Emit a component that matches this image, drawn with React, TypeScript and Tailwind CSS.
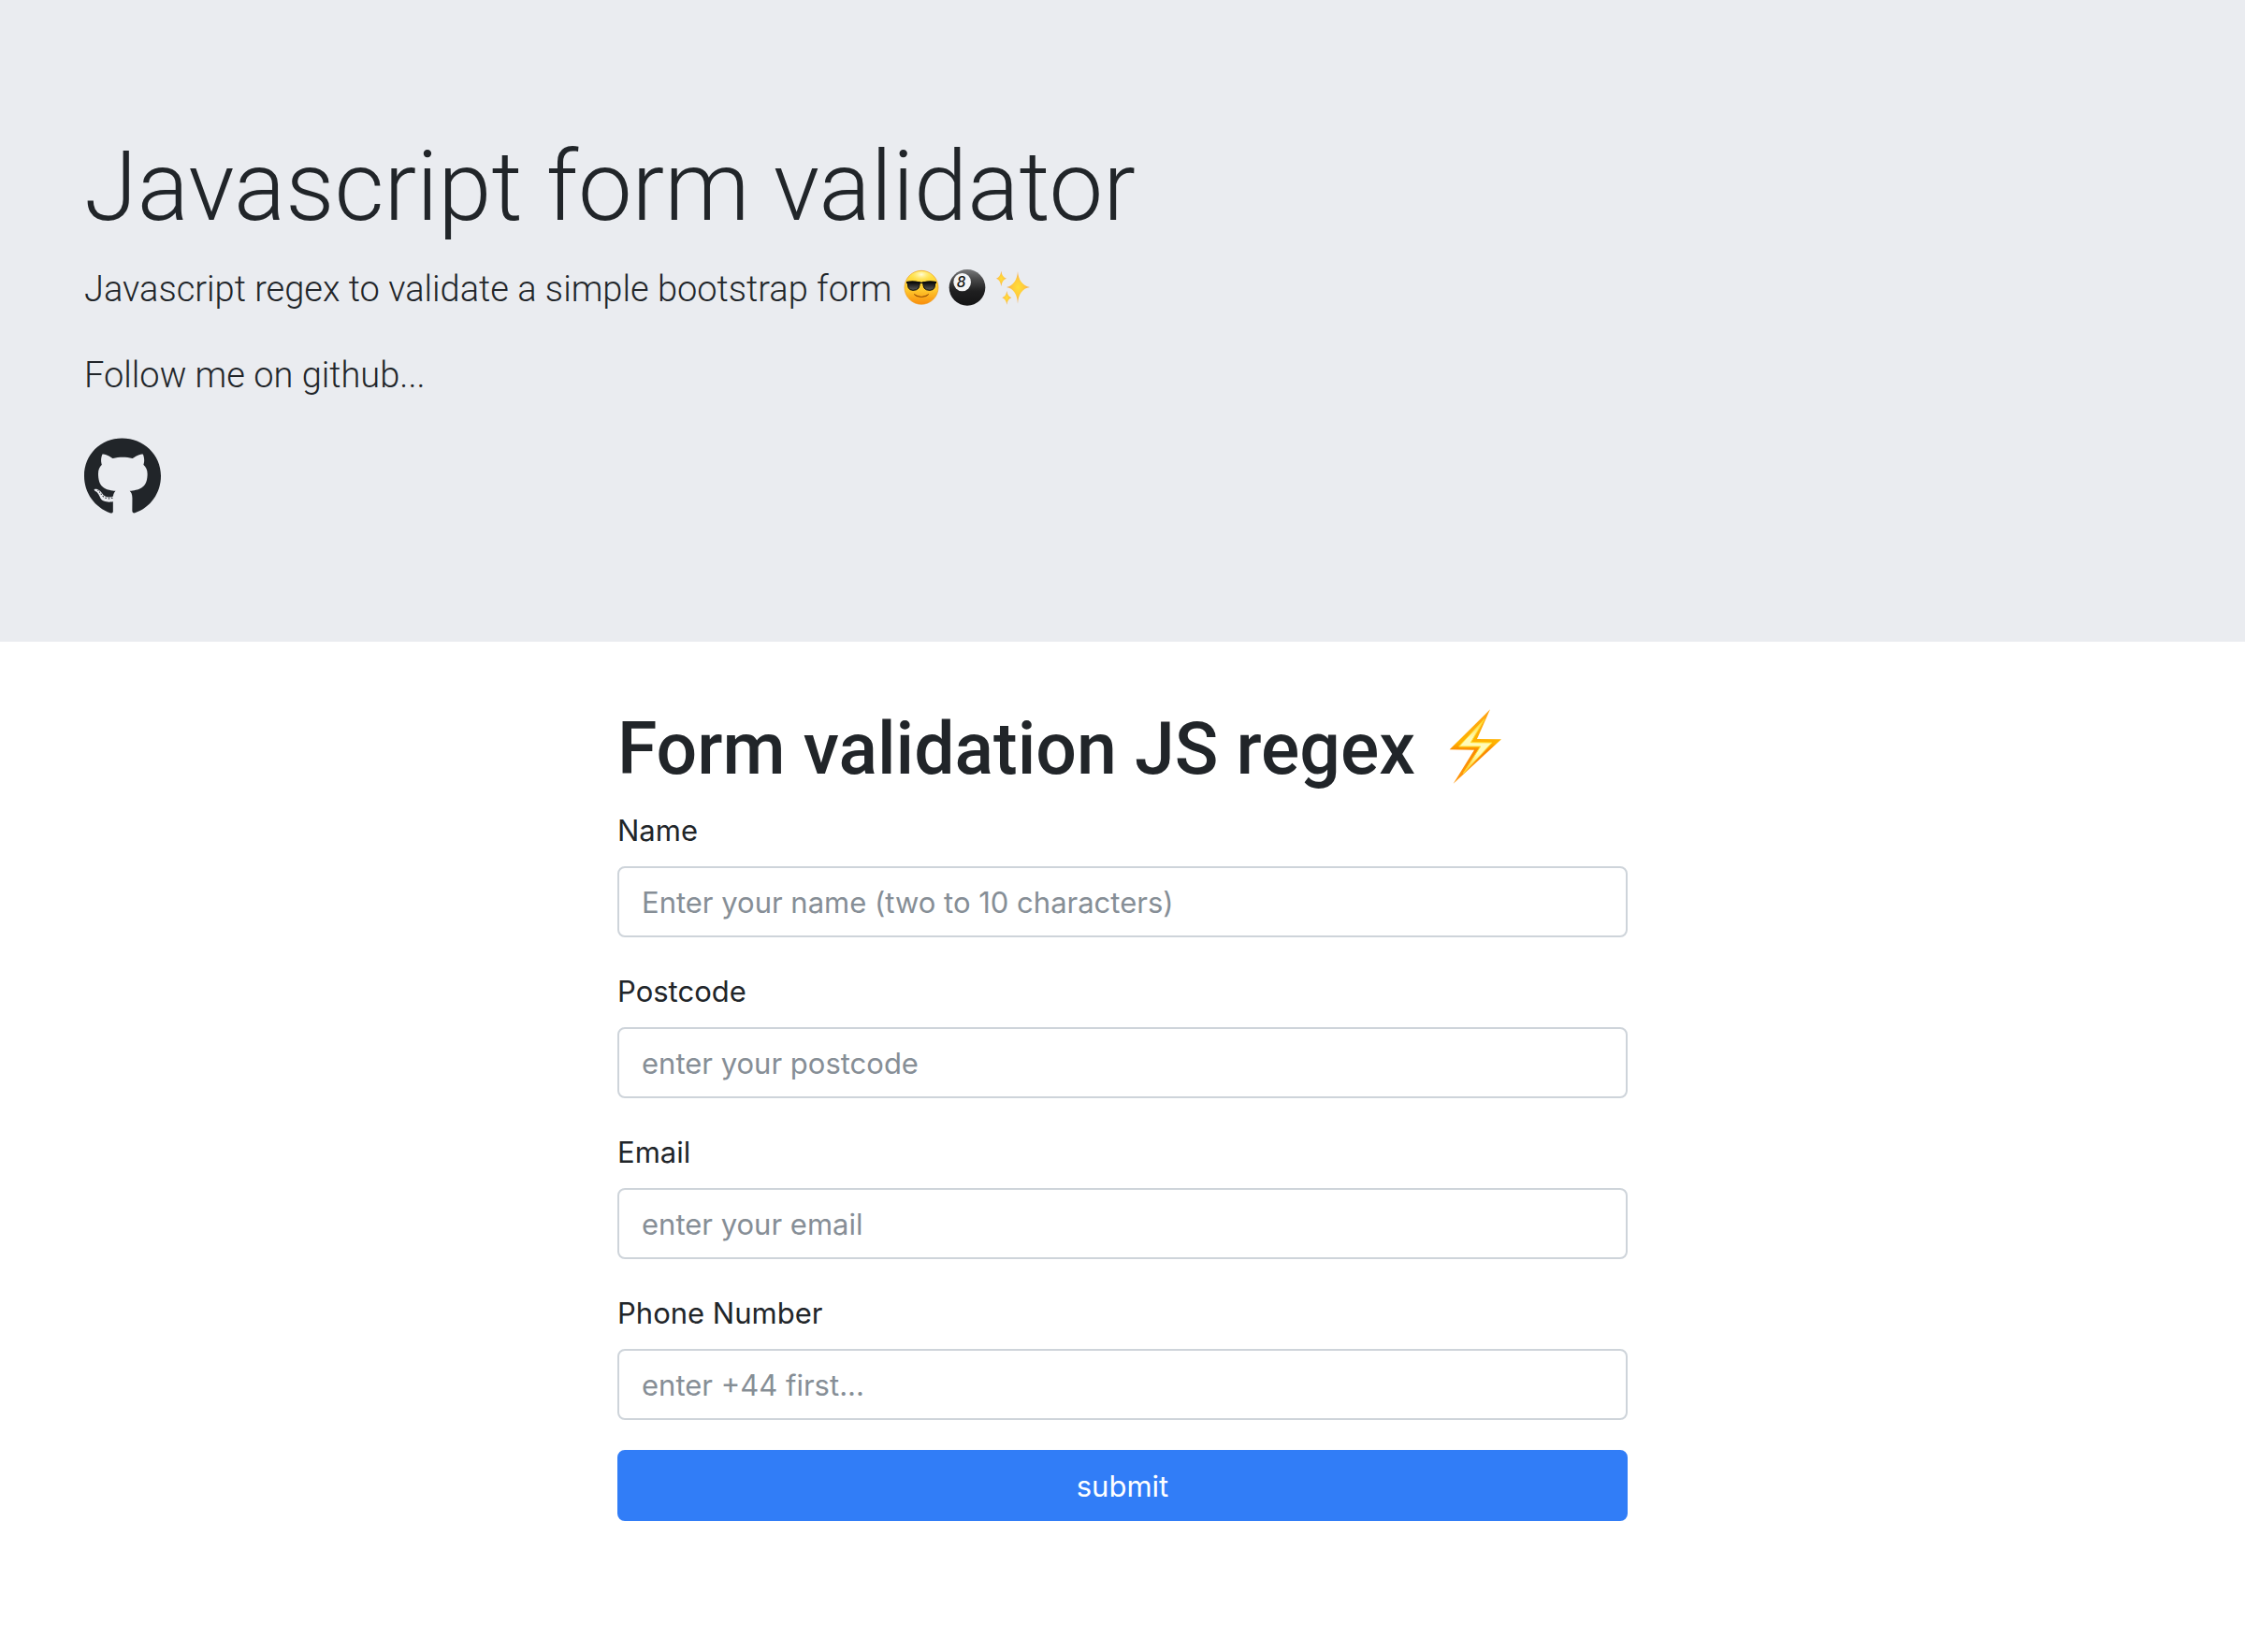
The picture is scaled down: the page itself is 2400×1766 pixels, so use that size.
import { useState } from "react";
import type { FormEvent } from "react";
import { FaGithub } from "react-icons/fa";

function CoolFace() {
  return (
    <svg viewBox="0 0 120 120" className="h-10 w-10 shrink-0" role="img" aria-label="smiling face with sunglasses">
      <defs>
        <linearGradient id="face" x1="0" y1="0" x2="0" y2="1">
          <stop offset="0" stopColor="#ffe64a" />
          <stop offset="0.55" stopColor="#ffcc2e" />
          <stop offset="1" stopColor="#f98d0c" />
        </linearGradient>
        <radialGradient id="faceShine" cx="0.5" cy="0.2" r="0.5">
          <stop offset="0" stopColor="#fffde0" stopOpacity="0.95" />
          <stop offset="1" stopColor="#ffe64a" stopOpacity="0" />
        </radialGradient>
        <linearGradient id="lens" x1="0" y1="0" x2="0" y2="1">
          <stop offset="0" stopColor="#0a0a0a" />
          <stop offset="1" stopColor="#5c5c5a" />
        </linearGradient>
      </defs>
      <circle cx="60" cy="58" r="54" fill="url(#face)" stroke="#ee9a1c" strokeWidth="2" />
      <ellipse cx="60" cy="32" rx="42" ry="26" fill="url(#faceShine)" />
      <path d="M36 79 Q60 96 84 79 Q78 89 60 89 Q42 89 36 79 Z" fill="#8a4300" stroke="#8a4300" strokeWidth="1" />
      <path d="M12 39 Q34 34 52 40 Q60 42 68 40 Q86 34 108 39 L108 45 L12 45 Z" fill="#0c0c0c" />
      <path d="M15 41 H55 Q55 53 51 60 Q46 67 33 67 Q21 67 18 58 Z" fill="url(#lens)" stroke="#0c0c0c" strokeWidth="3" />
      <path d="M105 41 H65 Q65 53 69 60 Q74 67 87 67 Q99 67 102 58 Z" fill="url(#lens)" stroke="#0c0c0c" strokeWidth="3" />
    </svg>
  );
}

function EightBall() {
  return (
    <svg viewBox="0 0 120 120" className="h-10 w-10 shrink-0" role="img" aria-label="pool 8 ball">
      <defs>
        <linearGradient id="ball" x1="0.5" y1="0" x2="0.5" y2="1">
          <stop offset="0" stopColor="#77787a" />
          <stop offset="0.3" stopColor="#454546" />
          <stop offset="0.6" stopColor="#1f1f20" />
          <stop offset="1" stopColor="#141415" />
        </linearGradient>
      </defs>
      <circle cx="60" cy="58" r="58" fill="url(#ball)" />
      <ellipse cx="44" cy="41" rx="28" ry="29" fill="#f4f5f6" />
      <text x="41" y="56" textAnchor="middle" fontFamily="Inter, sans-serif" fontSize="46" fontStyle="italic" fontWeight="500" fill="#111">
        8
      </text>
    </svg>
  );
}

function Sparkles() {
  return (
    <svg viewBox="0 0 120 120" className="h-10 w-10 shrink-0" role="img" aria-label="sparkles">
      <defs>
        <radialGradient id="spark">
          <stop offset="0" stopColor="#ffdf3a" />
          <stop offset="0.5" stopColor="#ffcb3c" />
          <stop offset="1" stopColor="#f4a95a" />
        </radialGradient>
      </defs>
      <g fill="url(#spark)">
        <path d="M75 6 Q78 49 114 57 Q78 63 75 110 Q72 63 39 57 Q72 49 75 6 Z" />
        <path d="M22 5 Q25 25 39 29 Q25 33 22 54 Q19 33 6 29 Q19 25 22 5 Z" />
        <path d="M40 69 Q43 87 55 91 Q43 95 40 113 Q37 95 25 91 Q37 87 40 69 Z" />
      </g>
    </svg>
  );
}

function Bolt() {
  return (
    <svg viewBox="0 0 240 240" className="mt-2 h-20 w-20 shrink-0" role="img" aria-label="high voltage">
      <defs>
        <linearGradient id="boltEdge" x1="0" y1="0" x2="0" y2="1">
          <stop offset="0" stopColor="#ffa318" />
          <stop offset="0.45" stopColor="#ffb300" />
          <stop offset="0.55" stopColor="#fb8a00" />
          <stop offset="1" stopColor="#ff9a10" />
        </linearGradient>
        <linearGradient id="boltCore" x1="0" y1="0" x2="0" y2="1">
          <stop offset="0" stopColor="#ffd52e" />
          <stop offset="0.35" stopColor="#fffbb8" />
          <stop offset="0.65" stopColor="#fffbb8" />
          <stop offset="1" stopColor="#ffc61e" />
        </linearGradient>
      </defs>
      <path d="M168 1 L38 130 L117 131 L50 239 L204 97 L126 96 Z" fill="url(#boltEdge)" />
      <path d="M150 32 L68 120 L137 120 L82 206 L174 108 L106 107 Z" fill="url(#boltCore)" stroke="#ffe030" strokeWidth="3" />
    </svg>
  );
}

const fields = [
  { id: "name", label: "Name", type: "text", placeholder: "Enter your name (two to 10 characters)" },
  { id: "postcode", label: "Postcode", type: "text", placeholder: "enter your postcode" },
  { id: "email", label: "Email", type: "email", placeholder: "enter your email" },
  { id: "phone", label: "Phone Number", type: "tel", placeholder: "enter +44 first..." },
];

export default function App() {
  const [values, setValues] = useState<Record<string, string>>({});

  const handleSubmit = (event: FormEvent) => event.preventDefault();

  return (
    <div className="min-h-screen bg-white font-['Inter',sans-serif] text-[31px] leading-[48px] text-[#212529]">
      <header className="bg-[#eaecf0] px-[90px] pt-[132px] pb-[134px] font-['Roboto',sans-serif]">
        <h1 className="mb-3 text-[103px] leading-[135px] font-light">Javascript form validator</h1>
        <p className="mb-8 flex items-center gap-3 text-[38px] leading-[60px] font-light">
          Javascript regex to validate a simple bootstrap form
          <span className="flex gap-[9px] pb-0.5">
            <CoolFace />
            <EightBall />
            <Sparkles />
          </span>
        </p>
        <p className="mb-9 text-[38px] leading-[60px] font-light">Follow me on github...</p>
        <a href="https://github.com" aria-label="GitHub" className="block w-fit">
          <FaGithub className="h-[85px] w-[82px]" />
        </a>
      </header>

      <main className="mx-auto w-[45%] pt-16 pb-16">
        <h2 className="mb-2.5 flex items-start gap-6 font-['Roboto',sans-serif] text-[77px] leading-[102px] font-medium whitespace-nowrap">
          Form validation JS regex
          <Bolt />
        </h2>
        <form onSubmit={handleSubmit}>
          {fields.map((field) => (
            <div key={field.id} className="mb-8">
              <label htmlFor={field.id} className="mb-3.5 block w-fit pt-0.5">
                {field.label}
              </label>
              <input
                id={field.id}
                type={field.type}
                placeholder={field.placeholder}
                value={values[field.id] ?? ""}
                onChange={(event) => setValues({ ...values, [field.id]: event.target.value })}
                className="block w-full rounded-lg border-2 border-[#ced4da] bg-white px-6 pt-[13px] pb-[11px] text-[#495057] placeholder:text-[#868e96]"
              />
            </div>
          ))}
          <button type="submit" className="block w-full rounded-lg border-2 border-[#317df7] bg-[#317df7] px-6 pt-[13px] pb-[11px] text-white">
            submit
          </button>
        </form>
      </main>
    </div>
  );
}
